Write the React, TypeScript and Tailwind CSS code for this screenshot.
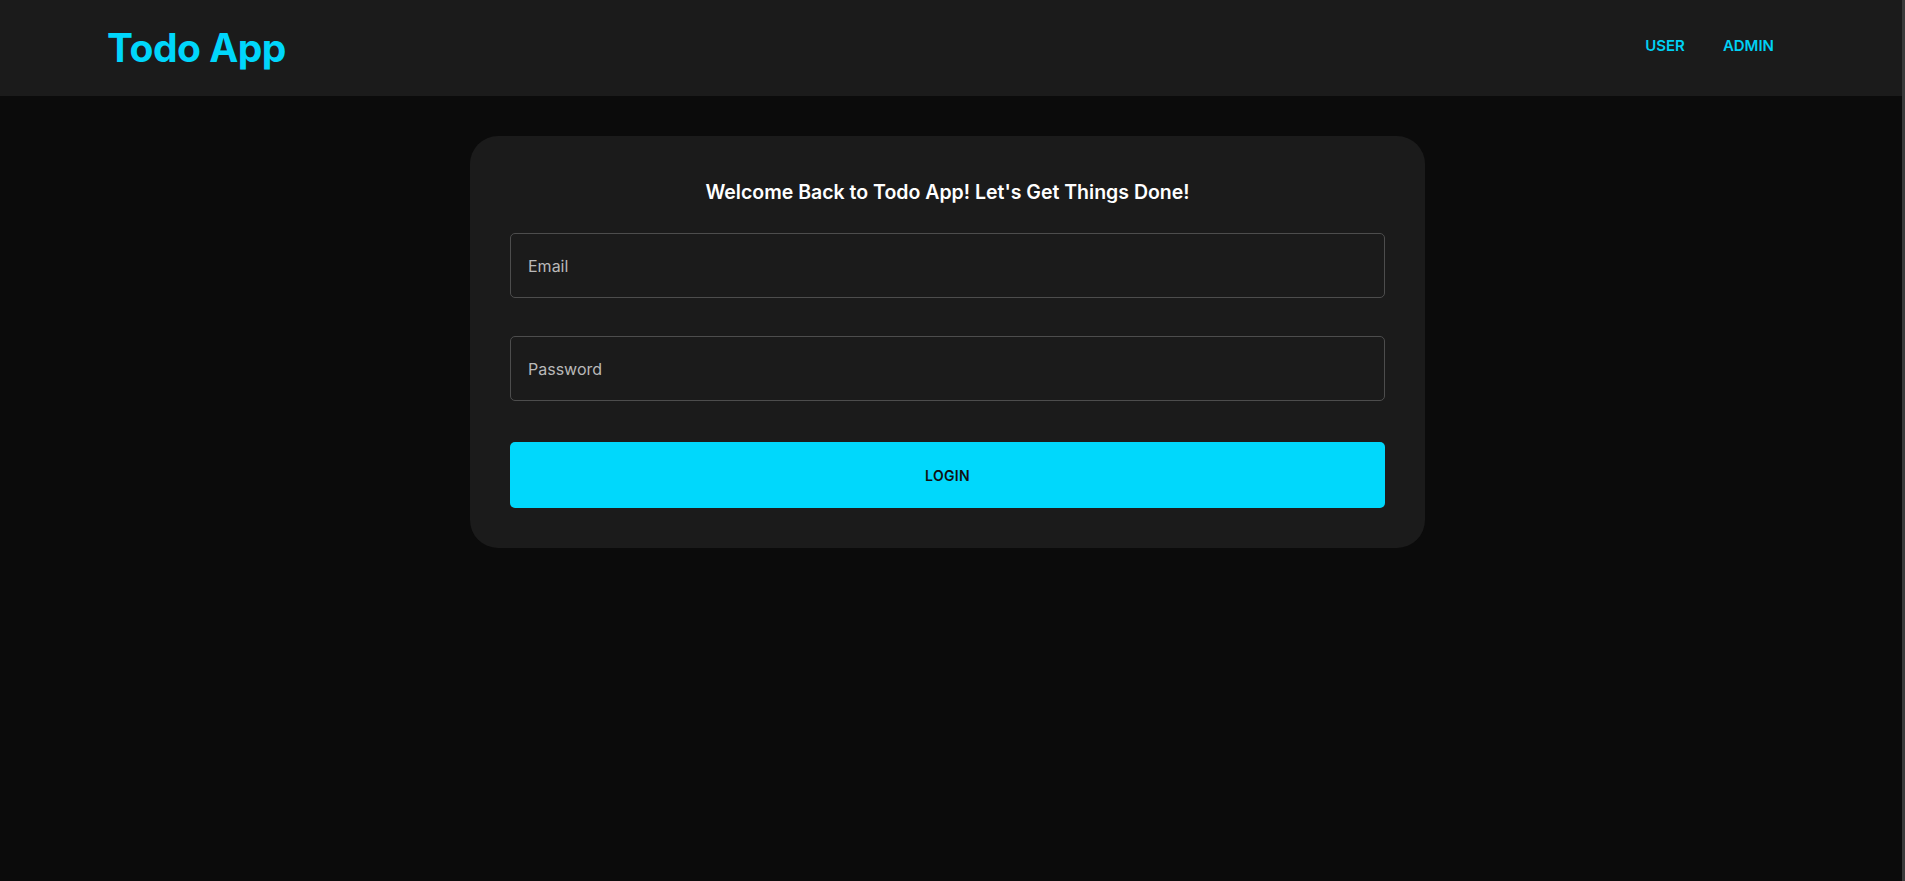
export default function App() {
  return (
    <div
      className="flex min-h-[881px] w-full bg-[#0b0b0b] text-white"
      style={{ fontFamily: "Inter, 'Noto Sans', sans-serif" }}
    >
      <div className="flex flex-1 flex-col">
        {/* Header */}
        <header className="flex h-[96px] items-center justify-between bg-[#1b1b1b] pl-[107px] pr-[128px]">
          <h1 className="text-[39px] font-bold tracking-[-0.5px] text-[#00d6fb]">Todo App</h1>
          <nav className="flex items-center gap-[38px] pb-[3px]">
            <a className="text-[15px] font-semibold text-[#00d0f4]">USER</a>
            <a className="text-[15px] font-semibold text-[#00d0f4]">ADMIN</a>
          </nav>
        </header>

        {/* Login card */}
        <main className="flex justify-center pr-[7px] pt-[40px]">
          <div className="w-[955px] rounded-[28px] bg-[#1b1b1b] px-[40px] pb-[40px] pt-[36px]">
            <h2 className="text-center text-[19.5px] font-semibold leading-[40px] text-white">
              Welcome Back to Todo App! Let's Get Things Done!
            </h2>
            <form className="mt-[21px] flex flex-col">
              <input
                type="email"
                placeholder="Email"
                className="h-[65px] w-full rounded-[5px] border border-[#4d4d4d] bg-[#1b1b1b] px-[17px] text-[16px] text-white outline-none placeholder:text-[#b9b9b9]"
              />
              <input
                type="password"
                placeholder="Password"
                className="mt-[38px] h-[65px] w-full rounded-[5px] border border-[#4d4d4d] bg-[#1b1b1b] px-[17px] text-[16px] text-white outline-none placeholder:text-[#b9b9b9]"
              />
              <button
                type="button"
                className="mt-[41px] h-[66px] w-full rounded-[5px] bg-[#00d8fc] text-[14px] font-semibold tracking-[0.3px] text-[#111]"
              >
                LOGIN
              </button>
            </form>
          </div>
        </main>
      </div>
      <div className="w-[3px] bg-[#3a3a3a]" />
    </div>
  );
}
